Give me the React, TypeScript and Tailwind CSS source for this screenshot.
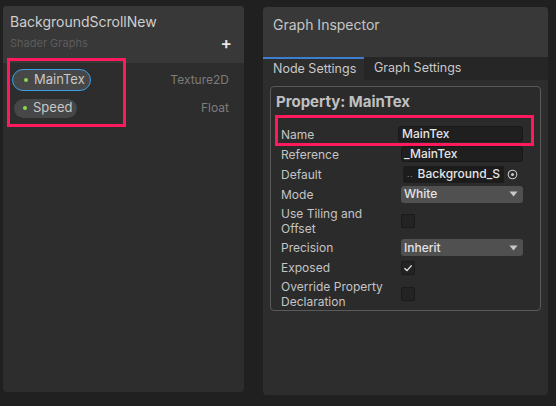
import React from "react";

const Check = () => (
  <svg width="10" height="10" viewBox="0 0 10 10">
    <path d="M1.5 5.2 L4 7.6 L8.6 2.4" stroke="#e6e6e6" strokeWidth="1.4" fill="none" />
  </svg>
);

const Tri = () => (
  <svg width="9" height="6" viewBox="0 0 9 6">
    <path d="M0.5 0.5 L8.5 0.5 L4.5 5.5 Z" fill="#c8c8c8" />
  </svg>
);

function Row({ label, h, children }: { label: React.ReactNode; h: string; children?: React.ReactNode }) {
  return (
    <div className={`flex items-center ${h}`}>
      <div className="w-[120px] text-[12px] leading-[15px] text-[#c4c4c4]">{label}</div>
      <div className="flex-1 flex items-center">{children}</div>
    </div>
  );
}

function Box({ checked }: { checked?: boolean }) {
  return (
    <div className="w-[14px] h-[14px] rounded-[2px] bg-[#232323] border border-[#1a1a1a] flex items-center justify-center">
      {checked && <Check />}
    </div>
  );
}

function Dropdown({ value }: { value: string }) {
  return (
    <div className="w-[122px] h-[17px] rounded-[3px] bg-[#505050] flex items-center justify-between pl-[3px] pr-[5px]">
      <span className="text-[12px] font-medium text-[#e4e4e4]">{value}</span>
      <Tri />
    </div>
  );
}

export default function App() {
  return (
    <div
      className="relative w-[556px] h-[406px] bg-[#202020] flex items-start overflow-hidden"
      style={{ fontFamily: "Inter, 'Noto Sans', sans-serif" }}
    >
      {/* Left panel */}
      <div className="ml-[3px] mt-[6px] w-[241px] h-[386px] rounded-[4px] bg-[#2d2d2d] overflow-hidden flex flex-col">
        <div className="h-[57px] bg-[#383838] pl-[7px] pr-[12px] pt-[7px] flex flex-col">
          <div className="text-[14px] leading-[18px] text-[#cfcfcf]">BackgroundScrollNew</div>
          <div className="flex items-center justify-between mt-[4px]">
            <span className="text-[11px] text-[#5c5c5c]">Shader Graphs</span>
            <span className="text-[17px] leading-[17px] font-semibold text-[#e8e8e8]">+</span>
          </div>
        </div>
        <div className="flex flex-col pl-[9px] pr-[15px] pt-[6px]">
          <div className="h-[22px] flex items-center justify-between">
            <div className="h-[22px] w-[79px] rounded-full border-[1.5px] border-[#3aa0e6] bg-[#474747] flex items-center pl-[11px]">
              <span className="w-[4px] h-[4px] rounded-full bg-[#86d94e] mr-[6px]" />
              <span className="text-[13px] text-[#c8c8c8]">MainTex</span>
            </div>
            <span className="text-[12px] text-[#7c7c7c]">Texture2D</span>
          </div>
          <div className="h-[20px] mt-[7px] flex items-center justify-between">
            <div className="h-[19px] w-[63px] ml-[2px] rounded-full bg-[#474747] flex items-center pl-[9px]">
              <span className="w-[4px] h-[4px] rounded-full bg-[#86d94e] mr-[6px]" />
              <span className="text-[13px] text-[#c8c8c8]">Speed</span>
            </div>
            <span className="text-[12px] text-[#7c7c7c]">Float</span>
          </div>
        </div>
      </div>

      {/* Right panel */}
      <div className="ml-[19px] mt-[7px] w-[285px] h-[388px] rounded-[4px] bg-[#2d2d2d] overflow-hidden flex flex-col">
        <div className="h-[50px] bg-[#383838] pl-[10px] pt-[9px]">
          <div className="text-[14px] leading-[18px] text-[#c4c4c4]">Graph Inspector</div>
        </div>
        <div className="h-[23px] flex bg-[#262626]">
          <div className="w-[101px] border-t-2 border-[#3d7fce] bg-[#2d2d2d] pl-[10px] flex items-center text-[12.5px] text-[#c8c8c8]">
            Node Settings
          </div>
          <div className="pl-[10px] flex items-center text-[12.5px] text-[#c8c8c8]">Graph Settings</div>
        </div>
        <div className="mx-[7px] mt-[6px] h-[225px] rounded-[4px] border border-[#5a5a5a] bg-[#2b2b2b] pl-[10px] pr-[17px] flex flex-col">
          <div className="h-[29px] flex items-center -ml-[5px] pt-[1px]">
            <span className="text-[15px] font-bold text-[#c0c0c0]">Property: MainTex</span>
          </div>
          <div className="h-[8px]" />
          <Row label="Name" h="h-[20px]">
            <div className="w-[125px] -ml-[1px] h-[16px] rounded-[3px] bg-[#1f1f1f] border border-[#191919] flex items-center pl-[3px]">
              <span className="text-[12px] font-medium text-[#e4e4e4]">MainTex</span>
            </div>
          </Row>
          <Row label="Reference" h="h-[20px]">
            <div className="w-[122px] h-[16px] rounded-[3px] bg-[#1f1f1f] border border-[#191919] flex items-center pl-[2px]">
              <span className="text-[12px] font-medium text-[#e4e4e4]">_MainTex</span>
            </div>
          </Row>
          <Row label="Default" h="h-[20px]">
            <div className="w-[117px] ml-[2px] h-[17px] rounded-[2px] bg-[#1c1c1c] flex items-center overflow-hidden">
              <span className="text-[8px] text-[#9a9a9a] pl-[4px] pr-[4px] tracking-[1px]">..</span>
              <span className="text-[12px] font-medium text-[#e4e4e4] flex-1 whitespace-nowrap overflow-hidden">Background_S</span>
              <div className="w-[16px] h-[17px] bg-[#2a2a2a] flex items-center justify-center">
                <svg width="11" height="11" viewBox="0 0 11 11">
                  <circle cx="5.5" cy="5.5" r="4.3" stroke="#c8c8c8" strokeWidth="1.1" fill="none" />
                  <circle cx="5.5" cy="5.5" r="1.5" fill="#c8c8c8" />
                </svg>
              </div>
            </div>
          </Row>
          <Row label="Mode" h="h-[20px]">
            <Dropdown value="White" />
          </Row>
          <Row label={<>Use Tiling and<br />Offset</>} h="h-[33px]">
            <Box />
          </Row>
          <Row label="Precision" h="h-[21px]">
            <Dropdown value="Inherit" />
          </Row>
          <Row label="Exposed" h="h-[19px]">
            <Box checked />
          </Row>
          <Row label={<>Override Property<br />Declaration</>} h="h-[33px]">
            <Box />
          </Row>
        </div>
      </div>

      {/* annotation boxes */}
      <div className="absolute left-[7px] top-[58px] w-[119px] h-[69px] border-[3px] border-[#ff1a5e]" />
      <div className="absolute left-[275px] top-[115px] w-[259px] h-[31px] border-[3px] border-[#ff1a5e]" />
    </div>
  );
}
